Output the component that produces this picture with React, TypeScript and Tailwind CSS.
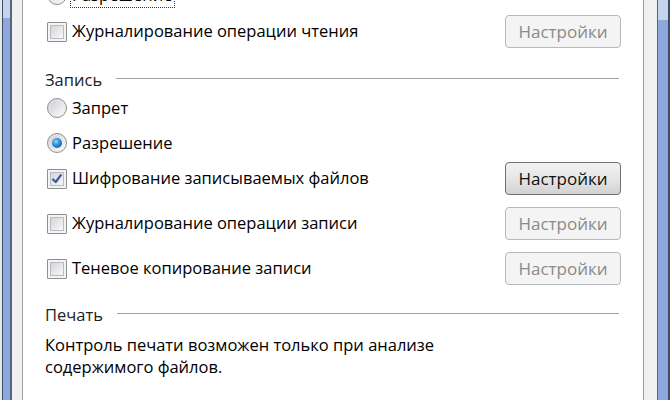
import React from "react";

const font = { fontFamily: '"Open Sans", "Noto Sans", sans-serif' };

function Checkbox({ checked }: { checked?: boolean }) {
  return (
    <div className="w-[20px] h-[20px] shrink-0 border border-[#8e8f8f] bg-[#f4f4f4] p-[2px] rounded-[1px]">
      <div className="w-full h-full border border-[#b8bcc2] bg-gradient-to-br from-[#d2d5d9] to-[#f8f8f8] relative">
        {checked && (
          <svg viewBox="0 0 14 14" className="absolute inset-0 w-full h-full">
            <path d="M2.5 7.5 L5.5 10.5 L11.5 2.5" fill="none" stroke="#3b5aa0" strokeWidth="2.6" strokeLinecap="round" strokeLinejoin="round" />
          </svg>
        )}
      </div>
    </div>
  );
}

function Radio({ checked }: { checked?: boolean }) {
  return (
    <div className="w-[20px] h-[20px] shrink-0 rounded-full border border-[#8e8f8f] bg-gradient-to-br from-[#d6d8db] to-[#f7f7f7] flex items-center justify-center">
      <div className="w-[14px] h-[14px] rounded-full bg-gradient-to-br from-[#cdd0d4] to-[#fafafa] flex items-center justify-center">
        {checked && (
          <div className="w-[10px] h-[10px] rounded-full bg-[radial-gradient(circle_at_40%_35%,#8fd3ff_0%,#2a8ad4_45%,#0b4a86_100%)]" />
        )}
      </div>
    </div>
  );
}

function Btn({ enabled }: { enabled?: boolean }) {
  return enabled ? (
    <div className="w-[116px] h-[33px] rounded-[4px] border border-[#707070] bg-gradient-to-b from-[#f2f2f2] via-[#e6e6e6] to-[#d2d2d2] flex items-center justify-center text-[#111] text-[17px]">
      Настройки
    </div>
  ) : (
    <div className="w-[116px] h-[33px] rounded-[4px] border border-[#b5b9bc] bg-[#f4f4f4] flex items-center justify-center text-[#8a8a8a] text-[17px]">
      Настройки
    </div>
  );
}

function CheckRow({ label, checked, enabled, className }: { label: string; checked?: boolean; enabled?: boolean; className?: string }) {
  return (
    <div className={"h-[33px] flex items-center " + (className ?? "")}>
      <Checkbox checked={checked} />
      <span className="ml-[5px] flex-1">{label}</span>
      <Btn enabled={enabled} />
    </div>
  );
}

function Heading({ label, className }: { label: string; className?: string }) {
  return (
    <div className={"h-[28px] flex items-center -ml-[2px] " + (className ?? "")}>
      <span className="text-[#222]">{label}</span>
      <div className="flex-1 h-px bg-[#a0a0a0] ml-[14px] mr-[2px] -mt-[3px]" />
    </div>
  );
}

export default function App() {
  return (
    <div className="w-[670px] h-[400px] overflow-hidden flex bg-[#f0f0f0] text-[16.5px] text-black" style={font}>
      {/* left frame */}
      <div className="w-[2px] h-full bg-[#e4e9f0]" />
      <div className="w-px h-full bg-[#3f4d62]" />
      <div className="w-[7px] h-full flex flex-col">
        <div className="h-[18px] bg-[#c4d4ee]" />
        <div className="flex-1 bg-[#8ea7dc]" />
      </div>
      <div className="w-[2px] h-full bg-[#56657c]" />
      <div className="w-[10px] h-full bg-[#f0f0f0]" />
      <div className="w-px h-full bg-[#a3a3a3]" />

      {/* main panel */}
      <div className="w-[620px] h-full bg-white pl-[24px] pr-[22px] flex flex-col">
        <div className="h-[24px] -mt-[17px] flex items-center shrink-0">
          <Radio checked />
          <span className="ml-[4px] px-[1px] outline-1 outline-dotted outline-[#333]">Разрешение</span>
        </div>
        <CheckRow label="Журналирование операции чтения" className="mt-[8px]" />
        <Heading label="Запись" className="mt-[18px]" />
        <div className="h-[24px] mt-[2px] flex items-center">
          <Radio />
          <span className="ml-[5px]">Запрет</span>
        </div>
        <div className="h-[24px] mt-[11px] flex items-center">
          <Radio checked />
          <span className="ml-[5px]">Разрешение</span>
        </div>
        <CheckRow label="Шифрование записываемых файлов" checked enabled className="mt-[7px]" />
        <CheckRow label="Журналирование операции записи" className="mt-[12px]" />
        <CheckRow label="Теневое копирование записи" className="mt-[12px]" />
        <Heading label="Печать" className="mt-[16px]" />
        <div className="mt-[5px] -ml-[2px] leading-[22px]">
          Контроль печати возможен только при анализе
          <br />
          содержимого файлов.
        </div>
      </div>

      {/* right frame */}
      <div className="w-px h-full bg-[#9c9c9c]" />
      <div className="w-[13px] h-full bg-[#f0f0f0]" />
      <div className="w-px h-full bg-[#56657c]" />
      <div className="w-[10px] h-full flex flex-col">
        <div className="h-[20px] bg-[#c4d4ee]" />
        <div className="flex-1 bg-[#8ea7dc]" />
      </div>
      <div className="w-[2px] h-full bg-[#3f4d62]" />
    </div>
  );
}
